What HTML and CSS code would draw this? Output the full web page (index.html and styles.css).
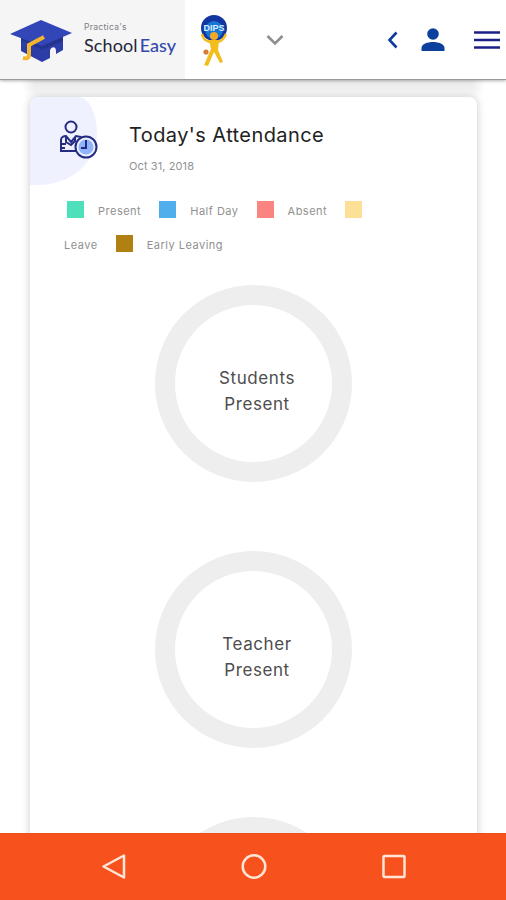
FILE: index.html
```html
<!DOCTYPE html>
<html lang="en">
<head>
    <meta charset="UTF-8">
    <meta name="viewport" content="width=device-width, initial-scale=1.0">
    <title>SchoolEasy</title>
    <link rel="stylesheet" href="styles.css">
</head>
<body>
    <header class="header">
        <div class="brand">
            <svg class="brand-logo" width="64" height="44" viewBox="0 0 64 44">
                <path d="M11 16v16l21 11 8-4v-7c0-4 6-6 6 0v3l7-4V16z" fill="#2c3da8"/>
                <path d="M11 21l21 10 21-9v-5H11z" fill="#24338f"/>
                <path d="M31 1l31 13-30 13L0 15z" fill="#3346b8"/>
                <path d="M34 18L19 26v10c0 3-2 4-6 3" fill="none" stroke="#f6b62c" stroke-width="4"/>
            </svg>
            <div class="brand-text">
                <span class="brand-owner">Practica's</span>
                <span class="brand-name">School<b>Easy</b></span>
            </div>
        </div>
        <svg class="school-logo" width="32" height="54" viewBox="0 0 32 54">
            <circle cx="17" cy="14" r="13" fill="#1236a0"/>
            <circle cx="17" cy="16" r="9" fill="#1976d2"/>
            <text x="17" y="17" class="school-text" text-anchor="middle">DIPS</text>
            <path d="M5 20c1 6 6 8 10 8M29 20c-2 5-6 8-10 8" fill="none" stroke="#f3bd1d" stroke-width="2.400"/>
            <circle cx="17" cy="22" r="4" fill="#f0a929"/>
            <path d="M12 26h10l-1 10 5 12-3 1-6-11-6 14-4-1 7-16z" fill="#f3bd1d"/>
            <circle cx="9" cy="38" r="2.600" fill="#d87936"/>
        </svg>
        <svg class="dropdown" width="18" height="12" viewBox="0 0 18 12">
            <path d="M1.500 2l7.500 7.500L16.500 2" fill="none" stroke="#8f8f8f" stroke-width="2.600"/>
        </svg>
        <svg class="back" width="12" height="18" viewBox="0 0 12 18">
            <path d="M9.500 1.500L2.500 9l7 7.500" fill="none" stroke="#0d3c9c" stroke-width="2.600"/>
        </svg>
        <svg class="user" width="24" height="24" viewBox="0 0 24 24">
            <circle cx="12" cy="6" r="5.800" fill="#0b419c"/>
            <path d="M.5 23v-3c0-4 6-6 11.500-6s11.500 2 11.500 6v3z" fill="#0b419c"/>
        </svg>
        <svg class="menu" width="26" height="18" viewBox="0 0 26 18">
            <path d="M0 1.500h26M0 9h26M0 16.500h26" stroke="#1d2089" stroke-width="2.400"/>
        </svg>
    </header>

    <main class="content">
        <div class="prev-card"></div>
        <section class="card">
            <div class="card-head">
                <div class="card-icon">
                    <svg width="40" height="40" viewBox="0 0 40 40" fill="none" stroke="#252b82" stroke-width="2">
                        <circle cx="12" cy="7" r="5.500"/>
                        <path d="M20 31H2V20c0-3 3-4 5-4l5 6 5-6 5 1M7 17v5l5 3 4-4v-4M2 24h5M2 28h4"/>
                        <circle cx="27" cy="27" r="10.500" fill="#edf1ff"/>
                        <circle cx="27" cy="27" r="7.500" fill="#8fb4fa" stroke="none"/>
                        <path d="M27 20v8h-5"/>
                    </svg>
                </div>
                <div class="card-title">
                    <h1>Today's Attendance</h1>
                    <p>Oct 31, 2018</p>
                </div>
            </div>

            <div class="legend">
                <span class="swatch present"></span><span class="label">Present</span>
                <span class="swatch half-day"></span><span class="label">Half Day</span>
                <span class="swatch absent"></span><span class="label">Absent</span>
                <span class="swatch leave"></span>
            </div>
            <div class="legend legend-wrap">
                <span class="label">Leave</span>
                <span class="swatch early"></span><span class="label">Early Leaving</span>
            </div>

            <div class="rings">
                <div class="ring"><span>Students<br>Present</span></div>
                <div class="ring"><span>Teacher<br>Present</span></div>
                <div class="ring"></div>
            </div>
        </section>
    </main>

    <nav class="navbar">
        <svg width="26" height="30" viewBox="0 0 26 30"><path d="M23 3.500v22L2.500 14.500z"/></svg>
        <svg width="26" height="30" viewBox="0 0 26 30"><circle cx="13" cy="14.500" r="11.300"/></svg>
        <svg width="26" height="30" viewBox="0 0 26 30"><rect x="2.500" y="4" width="21" height="21" rx="1"/></svg>
    </nav>
</body>
</html>
```
FILE: styles.css
```css
* {
    box-sizing: border-box;
}
body {
    margin: 0;
    height: 900px;
    display: flex;
    flex-direction: column;
    background: #ffffff;
    font-family: Inter, "Liberation Sans", sans-serif;
    overflow: hidden;
}
svg {
    flex: none;
}

/* Header */
.header {
    height: 80px;
    flex: none;
    display: flex;
    align-items: center;
    background: #ffffff;
    border-bottom: 1px solid #999999;
    box-shadow: 0 1px 3px rgba(0, 0, 0, 0.3);
    z-index: 1;
}
.brand {
    width: 185px;
    height: 79px;
    flex: none;
    display: flex;
    align-items: center;
    padding: 2px 0 0 10px;
    background: #f5f5f5;
}
.brand-text {
    display: flex;
    flex-direction: column;
    margin: -4px 0 0 10px;
    white-space: nowrap;
}
.brand-owner {
    font-size: 8.5px;
    line-height: 12px;
    letter-spacing: 0.3px;
    color: #7b7b83;
}
.brand-name {
    font-family: Lato, sans-serif;
    font-size: 18px;
    line-height: 24px;
    letter-spacing: 0.1px;
    color: #25253a;
}
.brand-name b {
    margin-left: 2px;
    font-weight: 500;
    color: #3349ad;
}
.school-logo {
    margin: 2px 0 0 12px;
}
.school-text {
    font: bold 9px "Liberation Sans", sans-serif;
    fill: #d9efff;
}
.dropdown {
    margin-left: 37px;
    margin-top: 1px;
}
.back {
    margin-left: 103px;
    margin-top: 1px;
}
.user {
    margin-left: 22px;
}
.menu {
    margin-left: 29px;
    margin-top: 1px;
}

/* Attendance card */
.content {
    height: 753px;
    flex: none;
    padding: 0 29px 0 30px;
    overflow: hidden;
}
.prev-card {
    height: 3px;
    margin: 0 4px 14px;
    background: #ededed;
    box-shadow: 0 3px 9px 6px #ececec;
}
.card {
    height: 800px;
    border-radius: 8px;
    background: #ffffff;
    box-shadow: 0 0 9px rgba(0, 0, 0, 0.22);
    position: relative;
}
.card-head {
    height: 88px;
    display: flex;
}
.card-icon {
    width: 67px;
    height: 88px;
    padding: 23px 0 0 29px;
    background: #eff1ff;
    border-radius: 8px 20px 64px 0 / 8px 40px 56px 0;
}
.card-title {
    padding: 25px 0 0 32px;
}
.card-title h1 {
    margin: 0;
    font-size: 20px;
    font-weight: 400;
    line-height: 26px;
    letter-spacing: 0.42px;
    color: #222222;
    white-space: nowrap;
}
.card-title p {
    margin: 10px 0 0;
    font-size: 11px;
    line-height: 16px;
    letter-spacing: 0.1px;
    color: #929292;
}
.legend {
    display: flex;
    align-items: center;
    height: 18px;
    margin-top: 16px;
    padding-left: 37px;
    font-size: 11px;
    letter-spacing: 0.5px;
    color: #909090;
}
.card-head + .legend {
    margin-top: 15px;
}
.legend-wrap {
    padding-left: 34px;
}
.label {
    position: relative;
    top: 2px;
    margin-right: 18px;
    white-space: nowrap;
}
.swatch {
    width: 17px;
    height: 17px;
    margin-right: 14px;
}
.present { background: #4ee0bb; }
.half-day { background: #50aeec; }
.absent { background: #fa8580; }
.leave { background: #fce096; }
.early { background: #b08012; }
.rings {
    display: flex;
    flex-direction: column;
    align-items: center;
    gap: 69px;
    margin-top: 33px;
}
.ring {
    width: 197px;
    height: 197px;
    flex: none;
    border: 20px solid #eeeeee;
    border-radius: 50%;
    display: flex;
    align-items: center;
    justify-content: center;
    padding: 14px 0 0 7px;
    text-align: center;
    font-size: 17px;
    line-height: 26px;
    letter-spacing: 0.6px;
    color: #4d4d4d;
}

/* Android navigation bar */
.navbar {
    height: 67px;
    flex: none;
    display: flex;
    justify-content: center;
    align-items: center;
    gap: 114px;
    padding-left: 2px;
    border-top: 1px solid #e8501c;
    background: #f7521e;
    z-index: 1;
}
.navbar svg {
    fill: none;
    stroke: #ffe5d5;
    stroke-width: 2.5;
    stroke-linejoin: round;
}
```
